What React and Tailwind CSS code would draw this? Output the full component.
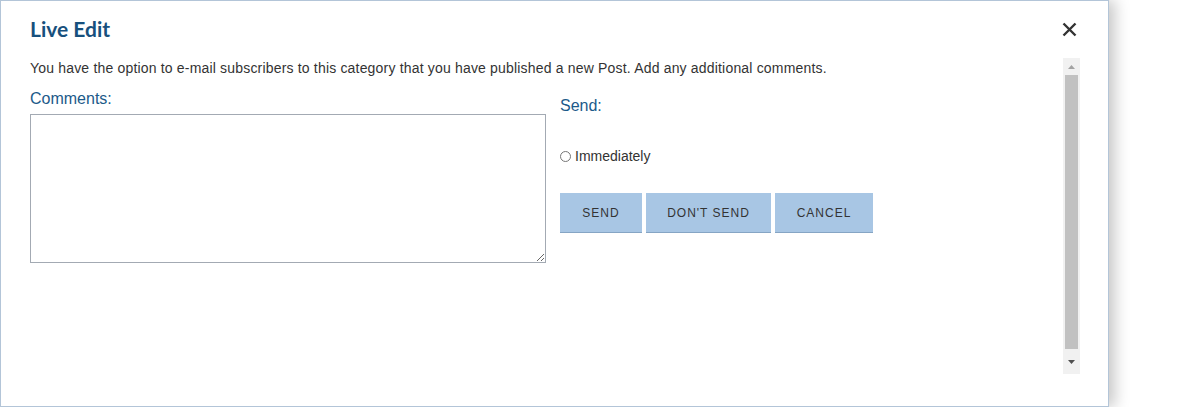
import React from 'react';

const buttons = [
  { label: 'SEND', w: 'w-[82px]' },
  { label: "DON'T SEND", w: 'w-[125px]' },
  { label: 'CANCEL', w: 'w-[98px]' },
];

const LiveEditDialog = () => {
  return (
    <div className="w-[1200px] h-[407px] bg-white overflow-hidden font-['Liberation_Sans',Arial,sans-serif]">
      <div className="w-[1109px] h-[407px] border border-[#b3c5d8] bg-white shadow-[6px_0_14px_rgba(0,0,0,0.22)] pl-[29px] pr-[28px] flex flex-col">
        {/* header */}
        <div className="h-[57px] flex items-center justify-between">
          <h1 className="font-['Lato',sans-serif] font-bold text-[21px] text-[#17507d] leading-none mb-[3px]">Live Edit</h1>
          <button className="w-[18px] h-[18px] mr-[2px] flex items-center justify-center text-[#333]">
            <svg width="15" height="15" viewBox="0 0 15 15">
              <path d="M1.5 1.5 L13.5 13.5 M13.5 1.5 L1.5 13.5" stroke="#333" strokeWidth="2.4" strokeLinecap="butt" />
            </svg>
          </button>
        </div>

        {/* body */}
        <div className="flex h-[316px]">
          <div className="flex-1 pt-[1px]">
            <p className="text-[14px] leading-[18px] tracking-[0.18px] text-[#333]">
              You have the option to e-mail subscribers to this category that you have published a new Post. Add any additional comments.
            </p>
            <div className="flex gap-[14px] mt-[13px]">
              <div className="w-[516px]">
                <label className="block text-[16px] leading-[18px] text-[#1c5a8a]">Comments:</label>
                <textarea className="block mt-[6px] w-[516px] h-[149px] border border-[#a3aab3] bg-white resize-y outline-none" />
              </div>
              <div className="pt-[7px]">
                <div className="text-[16px] leading-[18px] text-[#1c5a8a]">Send:</div>
                <label className="flex items-center mt-[32px] text-[14px] leading-[18px] text-[#333]">
                  <span className="w-[11px] h-[11px] rounded-full border border-[#767676] bg-white mr-[4px]" />
                  Immediately
                </label>
                <div className="flex gap-[4px] mt-[28px]">
                  {buttons.map((b) => (
                    <button
                      key={b.label}
                      className={`${b.w} h-[40px] bg-[#a8c6e4] border-b border-[#86a5c4] text-[12px] tracking-[1px] text-[#333]`}
                    >
                      {b.label}
                    </button>
                  ))}
                </div>
              </div>
            </div>
          </div>

          {/* scrollbar */}
          <div className="w-[17px] bg-[#f1f1f1] flex flex-col items-center">
            <div className="h-[17px] flex items-center justify-center">
              <svg width="7" height="4" viewBox="0 0 7 4"><path d="M3.5 0 L7 4 L0 4 Z" fill="#a3a3a3" /></svg>
            </div>
            <div className="w-[13px] flex-1 bg-[#c1c1c1]" />
            <div className="h-[25px] flex items-center justify-center">
              <svg width="7" height="4" viewBox="0 0 7 4"><path d="M0 0 L7 0 L3.5 4 Z" fill="#505050" /></svg>
            </div>
          </div>
        </div>
      </div>
    </div>
  );
};

export default function App() {
  return <LiveEditDialog />;
}
